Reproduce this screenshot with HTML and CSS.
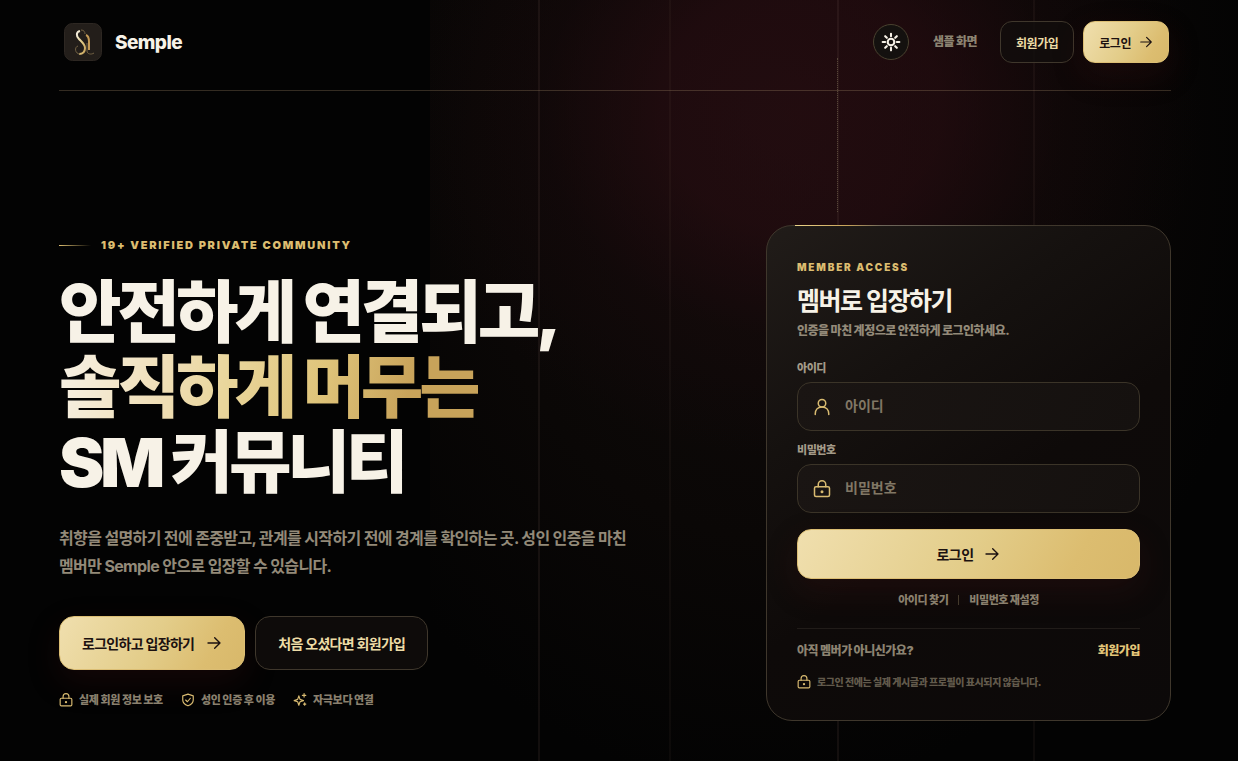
FILE: index.html
```html
<!DOCTYPE html>
<html lang="ko">
<head>
<meta charset="utf-8">
<meta name="viewport" content="width=device-width, initial-scale=1">
<title>Semple</title>
<link rel="stylesheet" href="styles.css">
</head>
<body>
<svg class="defs" aria-hidden="true">
  <symbol id="arrow" viewBox="0 0 24 24"><path d="M3 12h18M13 4l8 8-8 8"/></symbol>
  <symbol id="lock" viewBox="0 0 24 24"><rect x="2" y="9" width="20" height="13" rx="2"/><path d="M7 9V6a5 5 0 0 1 10 0v3"/><circle cx="12" cy="15.500" r="1"/></symbol>
</svg>
<div class="backdrop" aria-hidden="true"><i></i><i></i><i></i><i></i></div>
<div class="page">
  <header class="header">
    <a class="brand" href="#">
      <svg class="logo" viewBox="0 0 38 38" aria-hidden="true">
        <defs><linearGradient id="gold" x1="0" y1="0" x2="1" y2="1"><stop offset="0" stop-color="#f7f2e7"/><stop offset=".5" stop-color="#e4ce8b"/><stop offset="1" stop-color="#c8a35a"/></linearGradient></defs>
        <rect x=".5" y=".5" width="37" height="37" rx="8" fill="#231e1a" stroke="#2d2722"/>
        <path d="M16 8c-4 1-4 5-1 8s6 5 6 9-2 6-6 6" fill="none" stroke="url(#gold)" stroke-width="2"/>
        <path d="M14 23c-4 1-3 8 2 8M17 7c3 0 4 2 4 4" fill="none" stroke="#746344"/>
        <path d="M22 12c3 1 3 4 3 7v8" fill="none" stroke="#c49a55" stroke-width="2"/>
        <path d="M23 20v8c0 3 4 4 7 2" fill="none" stroke="#746344"/>
      </svg>
      <span>Semple</span>
    </a>
    <nav class="nav">
      <button class="theme" type="button" aria-label="테마 변경"><svg class="icon icon-sun" viewBox="0 0 24 24"><circle cx="12" cy="12" r="4"/><path d="M12 2v3M12 19v3M2 12h3M19 12h3M5 5l2 2M17 17l2 2M5 19l2-2M17 7l2-2"/></svg></button>
      <a class="nav-link" href="#">샘플 화면</a>
      <a class="btn btn-dark btn-small" href="#">회원가입</a>
      <a class="btn btn-gold btn-small" href="#login">로그인 <svg class="icon icon-s"><use href="#arrow"/></svg></a>
    </nav>
  </header>
  <main class="hero">
    <section class="intro">
      <p class="eyebrow">19+ VERIFIED PRIVATE COMMUNITY</p>
      <h1>안전하게 연결되고,<br><span class="shine">솔직하게 머무는</span><br>SM 커뮤니티</h1>
      <p class="lead">취향을 설명하기 전에 존중받고, 관계를 시작하기 전에 경계를 확인하는 곳. 성인 인증을 마친 멤버만 Semple 안으로 입장할 수 있습니다.</p>
      <div class="actions">
        <a class="btn btn-gold btn-large" href="#login">로그인하고 입장하기 <svg class="icon icon-m"><use href="#arrow"/></svg></a>
        <a class="btn btn-dark btn-large" href="#">처음 오셨다면 회원가입</a>
      </div>
      <ul class="trust">
        <li><svg class="icon icon-s"><use href="#lock"/></svg>실제 회원 정보 보호</li>
        <li><svg class="icon icon-s" viewBox="0 0 24 24"><path d="M12 2l9 3v7c0 5-4 8-9 10-5-2-9-5-9-10V5zM8 12l3 3 5-6"/></svg>성인 인증 후 이용</li>
        <li><svg class="icon icon-s" viewBox="0 0 24 24"><path d="M10 5l2 6 6 2-6 2-2 6-2-6-6-2 6-2zM19 1v6M16 4h6M20 17v4M18 19h4"/></svg>자극보다 연결</li>
      </ul>
    </section>
    <section class="card" id="login">
      <p class="card-eyebrow">MEMBER ACCESS</p>
      <h2>멤버로 입장하기</h2>
      <p class="card-lead">인증을 마친 계정으로 안전하게 로그인하세요.</p>
      <form>
        <label for="user">아이디</label>
        <div class="field">
          <svg class="icon icon-f" viewBox="0 0 24 24"><circle cx="12" cy="7" r="5"/><path d="M3 22v-1c0-5 3-9 9-9s9 4 9 9v1"/></svg>
          <input id="user" type="text" placeholder="아이디">
        </div>
        <label for="pass">비밀번호</label>
        <div class="field">
          <svg class="icon icon-f"><use href="#lock"/></svg>
          <input id="pass" type="password" placeholder="비밀번호">
        </div>
        <button class="btn btn-gold btn-submit" type="submit">로그인 <svg class="icon icon-m"><use href="#arrow"/></svg></button>
      </form>
      <div class="help"><a href="#">아이디 찾기</a><a href="#">비밀번호 재설정</a></div>
      <div class="join"><span>아직 멤버가 아니신가요?</span><a href="#">회원가입</a></div>
      <p class="notice"><svg class="icon icon-s"><use href="#lock"/></svg>로그인 전에는 실제 게시글과 프로필이 표시되지 않습니다.</p>
    </section>
  </main>
</div>
</body>
</html>
```

FILE: styles.css
```css
* { box-sizing: border-box; }
body {
  margin: 0;
  background: #030303;
  color: #f7f2e7;
  font-family: Inter, "Noto Sans CJK KR", sans-serif;
  font-weight: 900;
}
a { color: inherit; text-decoration: none; }
p, h1, h2, ul { margin: 0; padding: 0; }
.defs { position: absolute; width: 0; height: 0; }
.icon { flex: none; fill: none; stroke: currentColor; stroke-width: 2; stroke-linecap: round; stroke-linejoin: round; }
.icon-s { width: 14px; height: 14px; }
.icon-m { width: 16px; height: 16px; }
.icon-f { width: 18px; height: 18px; }
.icon-sun { width: 20px; height: 20px; stroke-width: 2.5; }

.backdrop {
  position: absolute;
  inset: 0 0 0 430px;
  z-index: -1;
  background:
    radial-gradient(ellipse 400px 350px at 46% 110px, rgba(46, 13, 19, .6) 0, rgba(44, 12, 18, .55) 35%, rgba(26, 9, 12, .35) 65%, transparent),
    radial-gradient(ellipse 500px 640px at 42% 20%, #110c0b, #0a0706 60%, transparent);
}
.backdrop i {
  position: absolute;
  top: 0;
  bottom: 0;
  width: 2px;
  background: rgba(120, 95, 85, .14);
}
.backdrop i:nth-child(1) { left: 108px; }
.backdrop i:nth-child(2) { left: 239px; opacity: .6; }
.backdrop i:nth-child(3) { left: 407px; }
.backdrop i:nth-child(4) { left: 603px; opacity: .7; }
.backdrop::after {
  content: "";
  position: absolute;
  top: 58px;
  left: 407px;
  height: 154px;
  border-left: 1px dotted #574739;
}

.page { padding: 0 67px 0 59px; }
.header {
  display: flex;
  align-items: center;
  justify-content: space-between;
  padding: 21px 2px 27px 5px;
  border-bottom: 1px solid rgba(155, 130, 100, .32);
}
.brand { display: flex; align-items: center; gap: 13px; font-size: 19px; line-height: 24px; font-weight: 800; letter-spacing: -.03em; }
.brand span { padding-top: 2px; }
.logo { width: 38px; height: 38px; }
.nav { display: flex; align-items: center; font-size: 12px; }
.theme {
  display: flex;
  align-items: center;
  justify-content: center;
  width: 36px;
  height: 36px;
  padding: 0;
  border: 1px solid #49412f;
  border-radius: 50%;
  background: #14110f;
  color: #f7f2e7;
}
.nav-link { margin: 0 23px 0 24px; color: #8c8371; line-height: 18px; letter-spacing: -.04em; }
.btn {
  display: inline-flex;
  align-items: center;
  justify-content: center;
  border: 1px solid;
  font-family: inherit;
  font-weight: 700;
  letter-spacing: -.04em;
  white-space: nowrap;
}
.btn-gold {
  border-color: #dcbe74;
  background: linear-gradient(120deg, #f0dfae, #e3cd8a 50%, #dcbd70 80%, #d8b86a);
  color: #1b1110;
  box-shadow: 0 12px 32px rgba(80, 25, 25, .22);
}
.btn-dark { border-color: #3f372c; background: rgba(17, 14, 12, .8); color: #eddca6; }
.btn-small { height: 42px; padding: 0 15px; border-radius: 12px; font-size: 12px; gap: 8px; }
.btn-small + .btn-small { margin-left: 9px; }
.btn-large { height: 54px; padding: 0 22px; border-radius: 15px; font-size: 14px; gap: 12px; letter-spacing: -.05em; }

.hero {
  display: grid;
  grid-template-columns: minmax(0, 1fr) 405px;
  gap: 128px;
  align-items: center;
  padding: 134px 0 40px;
}
.eyebrow, .card-eyebrow { color: #dcbd70; font-weight: 900; line-height: 14px; }
.eyebrow { display: flex; align-items: center; gap: 10px; font-size: 11px; letter-spacing: .16em; }
.eyebrow::before { content: ""; width: 32px; height: 1px; background: linear-gradient(90deg, #dcbd70, transparent); }
h1 { margin-top: 23px; font-size: 68px; line-height: 75px; font-weight: 900; letter-spacing: -.06em; white-space: nowrap; }
.shine {
  background: linear-gradient(105deg, #f7f2e7 0, #f0dfb8 25%, #e9d69c 40%, #dfc47a 62%, #c8a35a 82%);
  -webkit-background-clip: text;
  background-clip: text;
  color: transparent;
}
.lead { margin-top: 24px; color: #938a79; font-size: 16px; line-height: 28px; font-weight: 700; letter-spacing: -.04em; word-break: keep-all; }
.actions { display: flex; gap: 10px; margin-top: 36px; }
.trust { display: flex; gap: 18px; margin-top: 22px; list-style: none; color: #8a806e; font-size: 11px; line-height: 16px; letter-spacing: -.03em; }
.trust li { display: flex; align-items: center; gap: 6px; }
.trust .icon, .notice .icon, .field .icon { color: #d9bb71; }

.card {
  position: relative;
  padding: 34px 30px 30px;
  border: 1px solid #3f372c;
  border-radius: 26px;
  background: linear-gradient(145deg, #211c19 0, #15110f 30%, #0e0a09 55%, #0c0909);
}
.card::before {
  content: "";
  position: absolute;
  top: -1px;
  left: 28px;
  right: 28px;
  height: 1px;
  background: linear-gradient(90deg, #ecd58a, #c8a35a 15%, #6f675b 25%, transparent 70%);
}
.card-eyebrow { font-size: 10px; letter-spacing: .18em; }
h2 { margin-top: 9px; font-size: 25px; line-height: 36px; font-weight: 700; letter-spacing: -.06em; }
.card-lead { margin-top: 3px; color: #938a79; font-size: 12px; line-height: 18px; letter-spacing: -.04em; }
label { display: block; color: #a39a88; font-size: 11px; line-height: 16px; letter-spacing: -.04em; }
form { margin-top: 20px; }
.field {
  display: flex;
  align-items: center;
  gap: 14px;
  height: 49px;
  margin: 6px 0 11px;
  padding: 0 15px;
  border: 1px solid #3b3428;
  border-radius: 14px;
  background: linear-gradient(110deg, #1a1513, #15110f);
}
.field input {
  flex: 1;
  min-width: 0;
  padding: 0 0 2px;
  border: 0;
  outline: 0;
  background: none;
  color: #f7f2e7;
  font: inherit;
  font-size: 14px;
  font-weight: 600;
}
.field input::placeholder { color: #817765; opacity: 1; }
.btn-submit { width: 100%; height: 50px; margin-top: 5px; border-radius: 14px; font-size: 14px; gap: 11px; }
.help { display: flex; justify-content: center; margin-top: 13px; color: #8a806e; font-size: 11px; line-height: 16px; letter-spacing: -.04em; }
.help a + a { position: relative; margin-left: 10px; padding-left: 11px; }
.help a + a::before { content: ""; position: absolute; left: 0; top: 3px; height: 10px; border-left: 1px solid #443a2c; }
.join {
  display: flex;
  justify-content: space-between;
  margin-top: 20px;
  padding-top: 13px;
  border-top: 1px solid #211c19;
  color: #8c8371;
  font-size: 12px;
  line-height: 18px;
  letter-spacing: -.04em;
}
.join a { color: #e3c679; }
.notice { display: flex; align-items: center; gap: 6px; margin-top: 14px; color: #625a4c; font-size: 10px; line-height: 16px; letter-spacing: -.04em; }
```
